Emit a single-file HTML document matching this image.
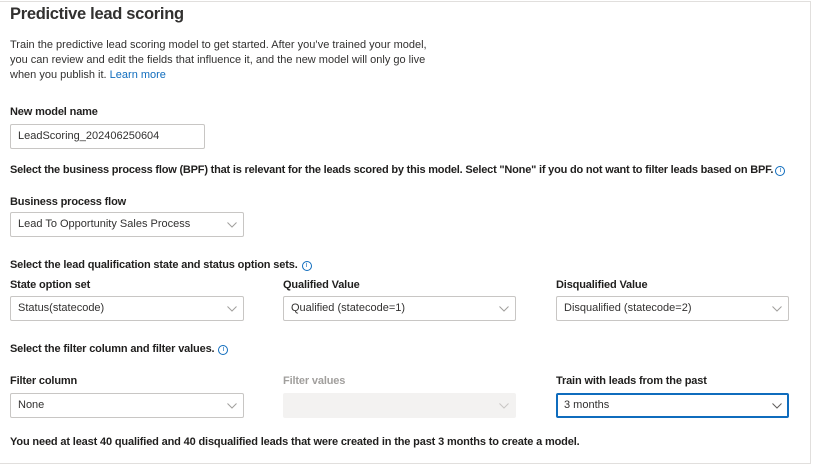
<!DOCTYPE html>
<html><head><meta charset="utf-8"><style>
*{margin:0;padding:0;box-sizing:border-box}
body{width:814px;height:466px;background:#fff;font-family:"Liberation Sans",Arial,sans-serif;color:#323130;position:relative;overflow:hidden}
.frame{position:absolute;left:-2px;top:1px;width:813px;height:463px;border:1px solid #e1dfdd}
.a{position:absolute;white-space:nowrap}
h1{position:absolute;left:10px;top:5px;font-size:16.5px;font-weight:bold;color:#323130;letter-spacing:-0.3px}
.p{font-size:11px;color:#323130;line-height:15px;left:10px}
.b{font-size:11px;font-weight:bold;letter-spacing:-0.15px;color:#201f1e}
.sel{position:absolute;height:25px;border:1px solid #c8c6c4;border-radius:2px;background:#fff;font-size:11px;padding-left:7px;line-height:23px;color:#323130}
.sel svg{position:absolute;right:6px;top:9px}
.info{display:inline-block;width:10px;height:10px;border:1px solid #0f6cbd;border-radius:50%;font-size:7px;line-height:8px;text-align:center;color:#0f6cbd;vertical-align:1px;margin-left:4px;font-weight:normal}
</style></head><body>
<div class="frame"></div>
<h1>Predictive lead scoring</h1>
<div class="a p" style="top:38px">Train the predictive lead scoring model to get started. After you’ve trained your model,<br>you can review and edit the fields that influence it, and the new model will only go live<br>when you publish it. <span style="color:#0f6cbd">Learn more</span></div>
<div class="a b" style="left:10px;top:106px">New model name</div>
<div class="sel" style="left:10px;top:124px;width:195px">LeadScoring_202406250604</div>
<div class="a b" style="left:10px;top:164px;letter-spacing:-0.2px">Select the business process flow (BPF) that is relevant for the leads scored by this model. Select "None" if you do not want to filter leads based on BPF.<span class="info" style="margin-left:2px">i</span></div>
<div class="a b" style="left:10px;top:196px">Business process flow</div>
<div class="sel" style="left:10px;top:212px;width:234px">Lead To Opportunity Sales Process<svg width="10" height="6"><path d="M0.5 0.5L5 5L9.5 0.5" fill="none" stroke="#a19f9d"/></svg></div>
<div class="a b" style="left:10px;top:259px">Select the lead qualification state and status option sets.<span class="info">i</span></div>
<div class="a b" style="left:10px;top:279px">State option set</div>
<div class="a b" style="left:283px;top:279px">Qualified Value</div>
<div class="a b" style="left:556px;top:279px">Disqualified Value</div>
<div class="sel" style="left:10px;top:296px;width:234px">Status(statecode)<svg width="10" height="6"><path d="M0.5 0.5L5 5L9.5 0.5" fill="none" stroke="#a19f9d"/></svg></div>
<div class="sel" style="left:283px;top:296px;width:233px">Qualified (statecode=1)<svg width="10" height="6"><path d="M0.5 0.5L5 5L9.5 0.5" fill="none" stroke="#a19f9d"/></svg></div>
<div class="sel" style="left:556px;top:296px;width:233px">Disqualified (statecode=2)<svg width="10" height="6"><path d="M0.5 0.5L5 5L9.5 0.5" fill="none" stroke="#a19f9d"/></svg></div>
<div class="a b" style="left:10px;top:343px">Select the filter column and filter values.<span class="info">i</span></div>
<div class="a b" style="left:10px;top:375px">Filter column</div>
<div class="a b" style="left:283px;top:375px;color:#a19f9d">Filter values</div>
<div class="a b" style="left:556px;top:375px">Train with leads from the past</div>
<div class="sel" style="left:10px;top:393px;width:234px">None<svg width="10" height="6"><path d="M0.5 0.5L5 5L9.5 0.5" fill="none" stroke="#a19f9d"/></svg></div>
<div class="sel" style="left:283px;top:393px;width:233px;background:#f3f2f1;border-color:#f3f2f1"><svg width="10" height="6"><path d="M0.5 0.5L5 5L9.5 0.5" fill="none" stroke="#c8c6c4"/></svg></div>
<div class="sel" style="left:556px;top:393px;width:233px;border:2px solid #0f6cbd;line-height:21px;padding-left:6px">3 months<svg width="10" height="6" style="top:8px;right:5px"><path d="M0.5 0.5L5 5L9.5 0.5" fill="none" stroke="#605e5c"/></svg></div>
<div class="a b" style="left:10px;top:436px">You need at least 40 qualified and 40 disqualified leads that were created in the past 3 months to create a model.</div>
</body></html>
